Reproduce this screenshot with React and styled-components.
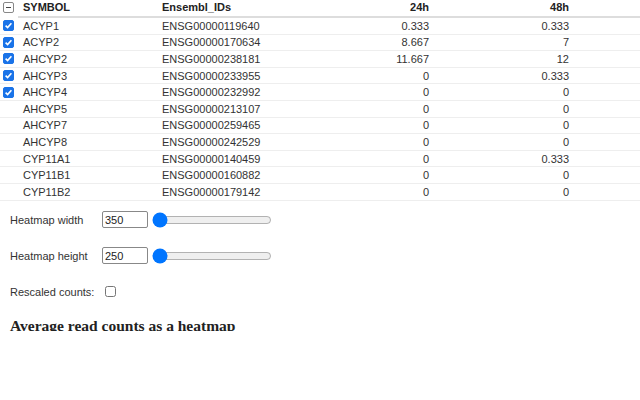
import React from 'react'
import styled, { createGlobalStyle } from 'styled-components'

const GlobalStyle = createGlobalStyle`
  body {
    margin: 0;
    background: #fff;
    font-family: "Liberation Sans", Arial, sans-serif;
    color: #333;
  }
`

const rows = [
    { symbol: 'ACYP1', id: 'ENSG00000119640', h24: '0.333', h48: '0.333', checked: true },
    { symbol: 'ACYP2', id: 'ENSG00000170634', h24: '8.667', h48: '7', checked: true },
    { symbol: 'AHCYP2', id: 'ENSG00000238181', h24: '11.667', h48: '12', checked: true },
    { symbol: 'AHCYP3', id: 'ENSG00000233955', h24: '0', h48: '0.333', checked: true },
    { symbol: 'AHCYP4', id: 'ENSG00000232992', h24: '0', h48: '0', checked: true },
    { symbol: 'AHCYP5', id: 'ENSG00000213107', h24: '0', h48: '0' },
    { symbol: 'AHCYP7', id: 'ENSG00000259465', h24: '0', h48: '0' },
    { symbol: 'AHCYP8', id: 'ENSG00000242529', h24: '0', h48: '0' },
    { symbol: 'CYP11A1', id: 'ENSG00000140459', h24: '0', h48: '0.333' },
    { symbol: 'CYP11B1', id: 'ENSG00000160882', h24: '0', h48: '0' },
    { symbol: 'CYP11B2', id: 'ENSG00000179142', h24: '0', h48: '0' },
]

const Page = styled.div`
  width: 640px;
  height: 331px;
  overflow: hidden;
`

const Table = styled.table`
  width: 640px;
  border-collapse: collapse;
  table-layout: fixed;
  font-size: 11px;
`

const HeadCell = styled.th`
  height: 15px;
  padding: 0 5px;
  font-weight: bold;
  color: #222;
  text-align: ${p => (p.right ? 'right' : 'left')};
  border-bottom: ${p => (p.noLine ? 'none' : '2px solid #ddd')};
  vertical-align: top;
  line-height: 14px;
`

const Cell = styled.td`
  height: 15.6px;
  padding: 0 5px;
  text-align: ${p => (p.right ? 'right' : 'left')};
  border-bottom: 1px solid #eee;
  line-height: 14px;
  white-space: nowrap;
`

const BoxCell = styled.td`
  padding: 0 0 0 3px;
  border-bottom: 1px solid #eee;
`

const Box = styled.span`
  display: block;
  width: 11px;
  height: 11px;
  box-sizing: border-box;
  border-radius: 2px;
  background: ${p => (p.checked ? '#1a73e8' : '#fff')};
  border: 1px solid ${p => (p.checked ? '#1a73e8' : p.muted ? '#888' : 'transparent')};
  position: relative;
`

const Tick = () => (
    <svg width="9" height="9" viewBox="0 0 9 9" style={{ position: 'absolute', left: 0, top: 0 }}>
        <path d="M1.6 4.6 L3.6 6.6 L7.4 2.2" fill="none" stroke="#fff" strokeWidth="1.6" />
    </svg>
)

const Dash = styled.span`
  position: absolute;
  left: 2px;
  right: 2px;
  top: 4px;
  height: 1px;
  background: #444;
`

const Controls = styled.div`
  padding: 10px 10px 0;
  font-size: 11px;
  color: #333;
`

const Field = styled.div`
  display: flex;
  align-items: center;
  height: 18px;
  margin-bottom: ${p => (p.last ? '16px' : '18px')};
  margin-top: ${p => (p.last ? '1px' : '0')};
`

const Label = styled.label`
  width: 92px;
`

const NumBox = styled.input`
  width: 46px;
  height: 17px;
  box-sizing: border-box;
  border: 1px solid #888;
  border-radius: 2px;
  padding: 0 2px;
  font-family: "Liberation Sans", Arial, sans-serif;
  font-size: 11px;
  color: #222;
`

const Slider = styled.input`
  width: 120px;
  margin: 0 0 0 4px;
  height: 12px;
`

const CheckInput = styled.input`
  width: 11px;
  height: 11px;
  margin: 0 0 0 3px;
`

const Heading = styled.h3`
  margin: 0;
  font-family: "Liberation Serif", "Times New Roman", serif;
  font-weight: bold;
  font-size: 15.5px;
  line-height: 18px;
  color: #222;
`

const App = () => (
    <Page>
        <GlobalStyle />
        <Table>
            <colgroup>
                <col style={{ width: 18 }} />
                <col style={{ width: 139 }} />
                <col style={{ width: 140 }} />
                <col style={{ width: 137 }} />
                <col style={{ width: 140 }} />
                <col />
            </colgroup>
            <thead>
                <tr>
                    <HeadCell noLine style={{ padding: '2px 0 0 3px' }}>
                        <Box muted><Dash /></Box>
                    </HeadCell>
                    <HeadCell>SYMBOL</HeadCell>
                    <HeadCell>Ensembl_IDs</HeadCell>
                    <HeadCell right>24h</HeadCell>
                    <HeadCell right>48h</HeadCell>
                    <HeadCell />
                </tr>
            </thead>
            <tbody>
                {rows.map(r => (
                    <tr key={r.symbol}>
                        <BoxCell>
                            <Box checked={r.checked}>{r.checked && <Tick />}</Box>
                        </BoxCell>
                        <Cell>{r.symbol}</Cell>
                        <Cell>{r.id}</Cell>
                        <Cell right>{r.h24}</Cell>
                        <Cell right>{r.h48}</Cell>
                        <Cell />
                    </tr>
                ))}
            </tbody>
        </Table>
        <Controls>
            <Field>
                <Label>Heatmap width</Label>
                <NumBox type="text" defaultValue="350" />
                <Slider type="range" min="0" max="1000" defaultValue="0" />
            </Field>
            <Field>
                <Label>Heatmap height</Label>
                <NumBox type="text" defaultValue="250" />
                <Slider type="range" min="0" max="1000" defaultValue="0" />
            </Field>
            <Field last>
                <Label>Rescaled counts:</Label>
                <CheckInput type="checkbox" />
            </Field>
            <Heading>Average read counts as a heatmap</Heading>
        </Controls>
    </Page>
)

export default App
